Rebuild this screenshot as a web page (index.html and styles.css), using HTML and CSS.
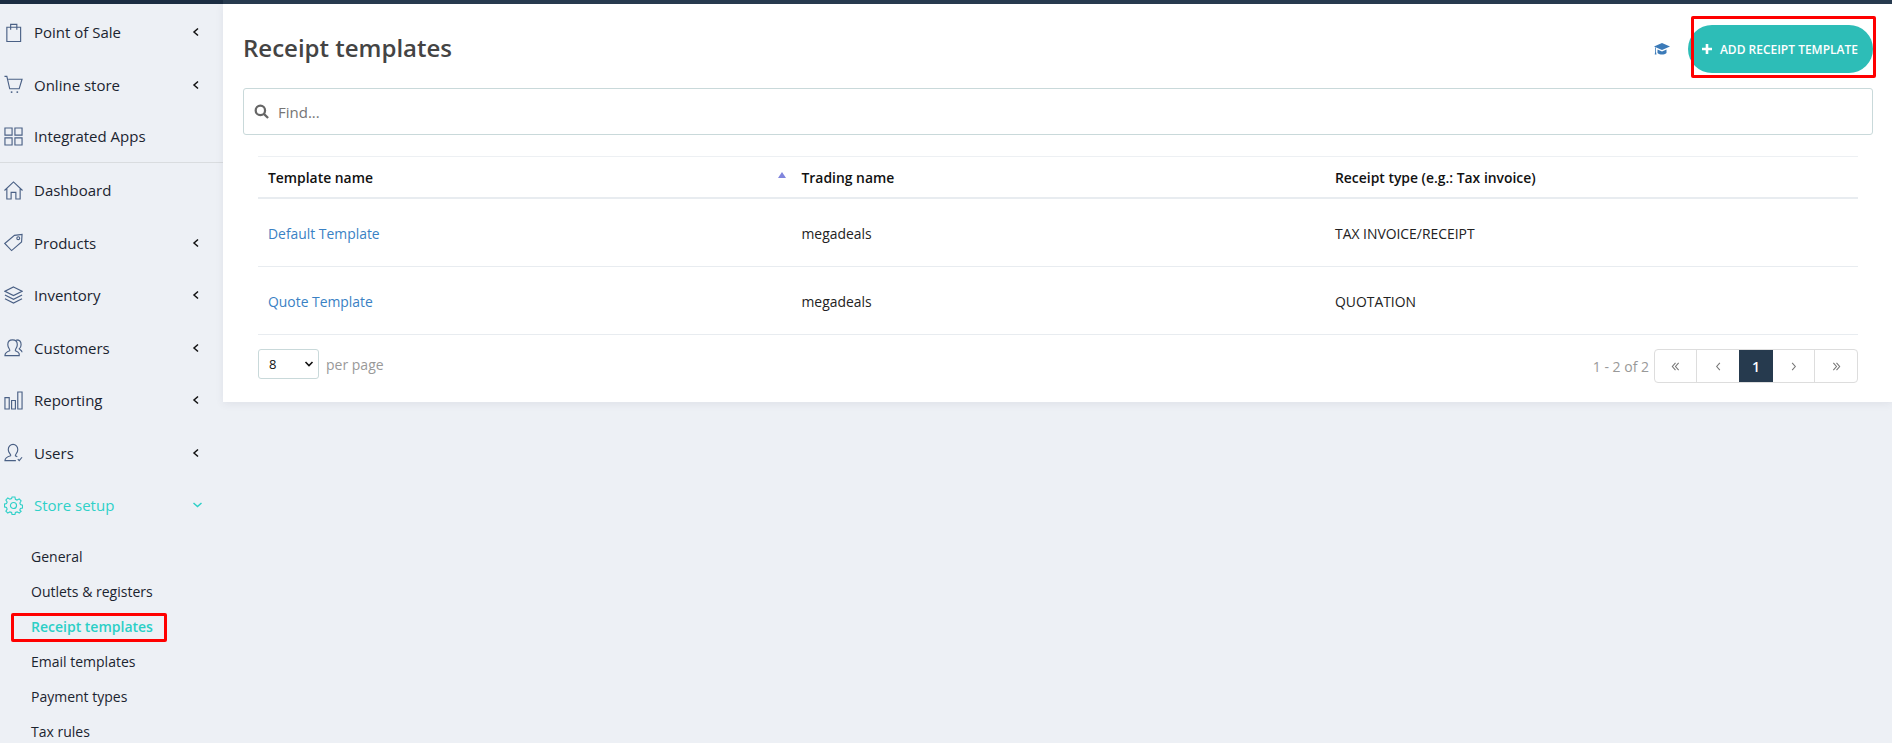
FILE: index.html
```html
<!DOCTYPE html>
<html lang="en">
<head>
<meta charset="utf-8">
<title>Receipt templates</title>
<link rel="stylesheet" href="styles.css">
</head>
<body>
<div class="topbar"><div class="topbar-left"></div></div>
<div class="app">
  <nav class="sidebar">
    <ul class="nav">
      <li class="nav-item">
        <svg class="nav-icon" viewBox="0 0 20 20"><path d="M3 4.500h14.500v15H3zM7 7V1.500h6.500V7"/></svg>
        <span class="nav-label">Point of Sale</span>
        <svg class="chev" viewBox="0 0 10 10"><path d="M7 1.500 3 5l4 3.500"/></svg>
      </li>
      <li class="nav-item">
        <svg class="nav-icon" viewBox="0 0 20 20"><path d="M.5 1.500h2.500l3 13h10l3-10H4.500"/><circle class="dot" cx="8" cy="18" r="1"/><circle class="dot" cx="14" cy="18" r="1"/></svg>
        <span class="nav-label">Online store</span>
        <svg class="chev" viewBox="0 0 10 10"><path d="M7 1.500 3 5l4 3.500"/></svg>
      </li>
      <li class="nav-item nav-item-divided">
        <svg class="nav-icon" viewBox="0 0 20 20"><path d="M1 1h7.500v7.500H1zM11.500 1H19v7.500h-7.500zM1 11.500h7.500V19H1zM11.500 11.500H19V19h-7.500z"/></svg>
        <span class="nav-label">Integrated Apps</span>
      </li>
      <li class="nav-item">
        <svg class="nav-icon" viewBox="0 0 20 20"><path d="M.5 10 10 1l9.500 9M3 8v11h4.500v-7h5v7H17V8"/></svg>
        <span class="nav-label">Dashboard</span>
      </li>
      <li class="nav-item">
        <svg class="nav-icon" viewBox="0 0 20 20"><path d="M.8 11 11 2.500l8-1-.5 8L8 18.500z"/><circle cx="15" cy="5.500" r="1.500"/></svg>
        <span class="nav-label">Products</span>
        <svg class="chev" viewBox="0 0 10 10"><path d="M7 1.500 3 5l4 3.500"/></svg>
      </li>
      <li class="nav-item">
        <svg class="nav-icon" viewBox="0 0 20 20"><path d="M10 1 19 5.500 10 10 1 5.500zM1 9.500 10 14l9-4.500M1 13.500 10 18l9-4.500"/></svg>
        <span class="nav-label">Inventory</span>
        <svg class="chev" viewBox="0 0 10 10"><path d="M7 1.500 3 5l4 3.500"/></svg>
      </li>
      <li class="nav-item">
        <svg class="nav-icon" viewBox="0 0 20 20"><path d="M1 18.500c0-3 2-4 5-5 1-1-2-3-2-6.500 0-3 2-5 5-5s5 2 5 5c0 3.500-3 5.500-2 6.500 2 .8 3.500 1.500 4 3v2zM13 2c3 0 5 2 5 5 0 2-1 3.500-2 4.500 1 .8 3 1.500 3 3.500"/></svg>
        <span class="nav-label">Customers</span>
        <svg class="chev" viewBox="0 0 10 10"><path d="M7 1.500 3 5l4 3.500"/></svg>
      </li>
      <li class="nav-item">
        <svg class="nav-icon" viewBox="0 0 20 20"><path d="M1 7h4.500v12H1zM8 10h4v9H8zM14.500 1H19v18h-4.500z"/></svg>
        <span class="nav-label">Reporting</span>
        <svg class="chev" viewBox="0 0 10 10"><path d="M7 1.500 3 5l4 3.500"/></svg>
      </li>
      <li class="nav-item">
        <svg class="nav-icon" viewBox="0 0 20 20"><path d="M12.500 18.500H1c0-3 2.500-4 6-5 1-1-2.500-3-2.500-6.500 0-3 2.200-5.500 5-5.500s5 2.500 5 5.500c0 3.500-3 5-2.500 6.500l2 1M14.500 17l1.500 1.500L19 15"/></svg>
        <span class="nav-label">Users</span>
        <svg class="chev" viewBox="0 0 10 10"><path d="M7 1.500 3 5l4 3.500"/></svg>
      </li>
      <li class="nav-item nav-item-active">
        <svg class="nav-icon" viewBox="0 0 20 20"><circle cx="10" cy="10" r="3.200"/><path d="M8.500 1h3l.5 2.500 1.700.8L16 3l2 2.200-1.300 2.200.6 1.600 2.200.6v3l-2.200.6-.7 1.700L18 16l-2 2-2.200-1.300-1.800.7-.5 2.100h-3L8 17.400l-1.800-.7L4 18l-2-2 1.300-2.200-.7-1.800L.5 11.500v-3l2.100-.5.7-1.700L2 4.200 4 2l2.200 1.300L8 2.600z"/></svg>
        <span class="nav-label">Store setup</span>
        <svg class="chev chev-open" viewBox="0 0 10 10"><path d="M1 3l4 3.500L9 3"/></svg>
      </li>
    </ul>
    <ul class="subnav">
      <li class="sub-item">General</li>
      <li class="sub-item">Outlets &amp; registers</li>
      <li class="sub-item sub-item-active">Receipt templates<span class="mark mark-sub"></span></li>
      <li class="sub-item">Email templates</li>
      <li class="sub-item">Payment types</li>
      <li class="sub-item">Tax rules</li>
    </ul>
  </nav>
  <main class="main">
    <section class="panel">
      <header class="head">
        <h1 class="title">Receipt templates</h1>
        <svg class="cap" viewBox="0 0 16 12"><path d="M8 0 16 3.500 8 7 0 3.500zM3.500 6.500 8 8.500l4.500-2V10c-2.500 2-6.500 2-9 0zM1.200 4.500h.8V9l.5 2.500h-1.800L1.200 9z"/></svg>
        <button class="add-btn" type="button">
          <svg class="plus" viewBox="0 0 10 10"><path d="M3.700 0h2.600v3.700H10v2.600H6.300V10H3.700V6.300H0V3.700h3.700z"/></svg>
          ADD RECEIPT TEMPLATE
        </button>
        <span class="mark mark-btn"></span>
      </header>
      <div class="search">
        <svg class="search-icon" viewBox="0 0 16 16"><circle cx="6.800" cy="6.800" r="5"/><path d="m10.500 10.500 4.500 4.500"/></svg>
        <span class="search-ph">Find...</span>
      </div>
      <div class="table-wrap">
        <table class="grid">
          <thead>
            <tr>
              <th class="col-name">Template name<span class="sort"></span></th>
              <th class="col-trade">Trading name</th>
              <th>Receipt type (e.g.: Tax invoice)</th>
            </tr>
          </thead>
          <tbody>
            <tr class="row-first">
              <td><a class="link">Default Template</a></td>
              <td>megadeals</td>
              <td>TAX INVOICE/RECEIPT</td>
            </tr>
            <tr>
              <td><a class="link">Quote Template</a></td>
              <td>megadeals</td>
              <td>QUOTATION</td>
            </tr>
          </tbody>
        </table>
        <div class="pager-row">
          <div class="per">
            <span class="select">8<svg class="select-chev" viewBox="0 0 10 10"><path d="M1.500 3 5 6.500 8.500 3"/></svg></span>
            <span class="muted per-label">per page</span>
          </div>
          <div class="pager">
            <span class="muted range">1 - 2 of 2</span>
            <div class="pages">
              <span class="page page-wide"><svg class="page-icon" viewBox="0 0 10 10"><path d="M5 1 1.500 5 5 9M8.500 1 5 5l3.500 4"/></svg></span>
              <span class="page page-wide"><svg class="page-icon" viewBox="0 0 10 10"><path d="M6.500 1 3 5l3.500 4"/></svg></span>
              <span class="page page-on">1</span>
              <span class="page page-wide"><svg class="page-icon" viewBox="0 0 10 10"><path d="M3.500 1 7 5 3.500 9"/></svg></span>
              <span class="page page-wide page-last"><svg class="page-icon" viewBox="0 0 10 10"><path d="M1.500 1 5 5 1.500 9M5 1l3.500 4L5 9"/></svg></span>
            </div>
          </div>
        </div>
      </div>
    </section>
  </main>
</div>
</body>
</html>
```
FILE: styles.css
```css
* { box-sizing: border-box; }
html, body { margin: 0; height: 100%; overflow: hidden; }
body {
  background: #edf0f5;
  color: #1b2430;
  font-family: "Open Sans", "Noto Sans", sans-serif;
  font-size: 14px;
}
ul { list-style: none; margin: 0; padding: 0; }

.topbar { height: 4px; background: #283b4f; }
.topbar-left { width: 223px; height: 4px; background: #1b2d42; }

.app { display: flex; height: 739px; }

.sidebar { width: 223px; flex: none; overflow: hidden; padding-top: 2px; }
.nav-item {
  height: 52.5px;
  display: flex;
  align-items: center;
  padding-left: 4px;
  font-size: 15px;
}
.nav-item-divided { border-bottom: 1px solid #d9dcdf; height: 51.5px; margin-bottom: 1.5px; }
.nav-item-active { color: #2fd0c8; }
.nav-label { margin-left: 11px; flex: 1; }
.nav-icon {
  width: 19px;
  height: 19px;
  flex: none;
  fill: none;
  stroke: #4a6085;
  stroke-width: 1.2;
}
.nav-icon .dot { fill: #4a6085; stroke: none; }
.nav-item-active .nav-icon { stroke: #2fd0c8; }
.chev {
  width: 10px;
  height: 10px;
  flex: none;
  margin-right: 22px;
  fill: none;
  stroke: #111;
  stroke-width: 1.5;
}
.chev-open { stroke: #2fd0c8; width: 11px; margin-right: 20px; }

.subnav { padding-top: 7px; }
.sub-item {
  position: relative;
  height: 35px;
  line-height: 35px;
  padding-left: 31px;
  font-size: 14px;
}
.sub-item-active { color: #2bcfc6; font-weight: 600; }

.mark { position: absolute; border: 3px solid #f00; border-radius: 2px; pointer-events: none; }
.mark-sub { left: 11px; top: 4px; width: 156px; height: 29px; }
.mark-btn { right: 16px; top: 16px; width: 185px; height: 62px; }

.main { flex: 1; min-width: 0; }
.panel {
  background: #fff;
  height: 398px;
  box-shadow: 0 2px 8px rgba(60, 70, 90, .08);
  padding: 0 19px 0 20px;
}
.head {
  height: 84px;
  display: flex;
  align-items: center;
  padding-top: 6px;
}
.title {
  margin: 0 0 3px;
  flex: 1;
  font-size: 24px;
  font-weight: 600;
  color: #444;
}
.cap { width: 16px; height: 12px; fill: #3b7ab8; margin-right: 18px; }
.add-btn {
  width: 185px;
  height: 48px;
  border: 0;
  border-radius: 24px;
  background: #2dbdb7;
  color: #fff;
  font: 600 12px "Open Sans", sans-serif;
  display: flex;
  align-items: center;
  justify-content: flex-end;
  padding: 0 15px 0 0;
  white-space: nowrap;
}
.plus { width: 10px; height: 10px; fill: #fff; margin-right: 8px; }

.search {
  height: 47px;
  border: 1px solid #c9d9da;
  border-radius: 3px;
  display: flex;
  align-items: center;
  padding-left: 10px;
}
.search-icon { width: 15px; height: 15px; fill: none; stroke: #666; stroke-width: 2.4; }
.search-ph { margin-left: 9px; font-size: 15px; color: #757575; }

.table-wrap { padding: 21px 15px 0 15px; }
.grid {
  width: 100%;
  border-collapse: collapse;
  table-layout: fixed;
  border-top: 1px solid #edf0f3;
}
.grid th {
  height: 41px;
  padding: 1px 10px 0;
  text-align: left;
  font-size: 13.9px;
  font-weight: 600;
  color: #111;
  border-bottom: 2px solid #e8ecf0;
}
.grid td {
  height: 68px;
  padding: 2px 10px 0;
  font-size: 13.9px;
  color: #222;
  border-bottom: 1px solid #e8ecf0;
}
.grid .row-first td { height: 69px; }
.col-name { width: 533.5px; position: relative; }
.col-trade { width: 533.5px; }
.sort {
  position: absolute;
  left: 520px;
  top: 15px;
  border: 4px solid transparent;
  border-top: 0;
  border-bottom: 6px solid #8085dd;
}
.link { color: #3a81c4; }

.pager-row {
  display: flex;
  justify-content: space-between;
  align-items: flex-start;
  padding-top: 14px;
}
.per { display: flex; align-items: center; }
.select {
  width: 61px;
  height: 30px;
  border: 1px solid #c9d9da;
  border-radius: 3px;
  padding-left: 10px;
  display: flex;
  align-items: center;
  justify-content: space-between;
  font-size: 13px;
  color: #111;
}
.select-chev { width: 10px; height: 10px; margin-right: 4px; fill: none; stroke: #111; stroke-width: 1.6; }
.muted { color: #999; }
.per-label { margin-left: 7px; font-size: 14px; }
.pager { display: flex; align-items: center; }
.range { margin-right: 5px; font-size: 14px; }
.pages {
  display: flex;
  height: 34px;
  border: 1px solid #ddd;
  border-radius: 4px;
  overflow: hidden;
}
.page {
  display: flex;
  align-items: center;
  justify-content: center;
  font-size: 14px;
  color: #777;
}
.page-wide { width: 42px; border-right: 1px solid #ddd; }
.page-wide:nth-child(2) { border-right: 0; }
.page-last { border-right: 0; }
.page-on { width: 34px; margin-top: -1px; margin-bottom: -1px; background: #263a4e; color: #fff; font-weight: 600; }
.page-icon { width: 9px; height: 9px; fill: none; stroke: #777; stroke-width: 1.2; }
```
